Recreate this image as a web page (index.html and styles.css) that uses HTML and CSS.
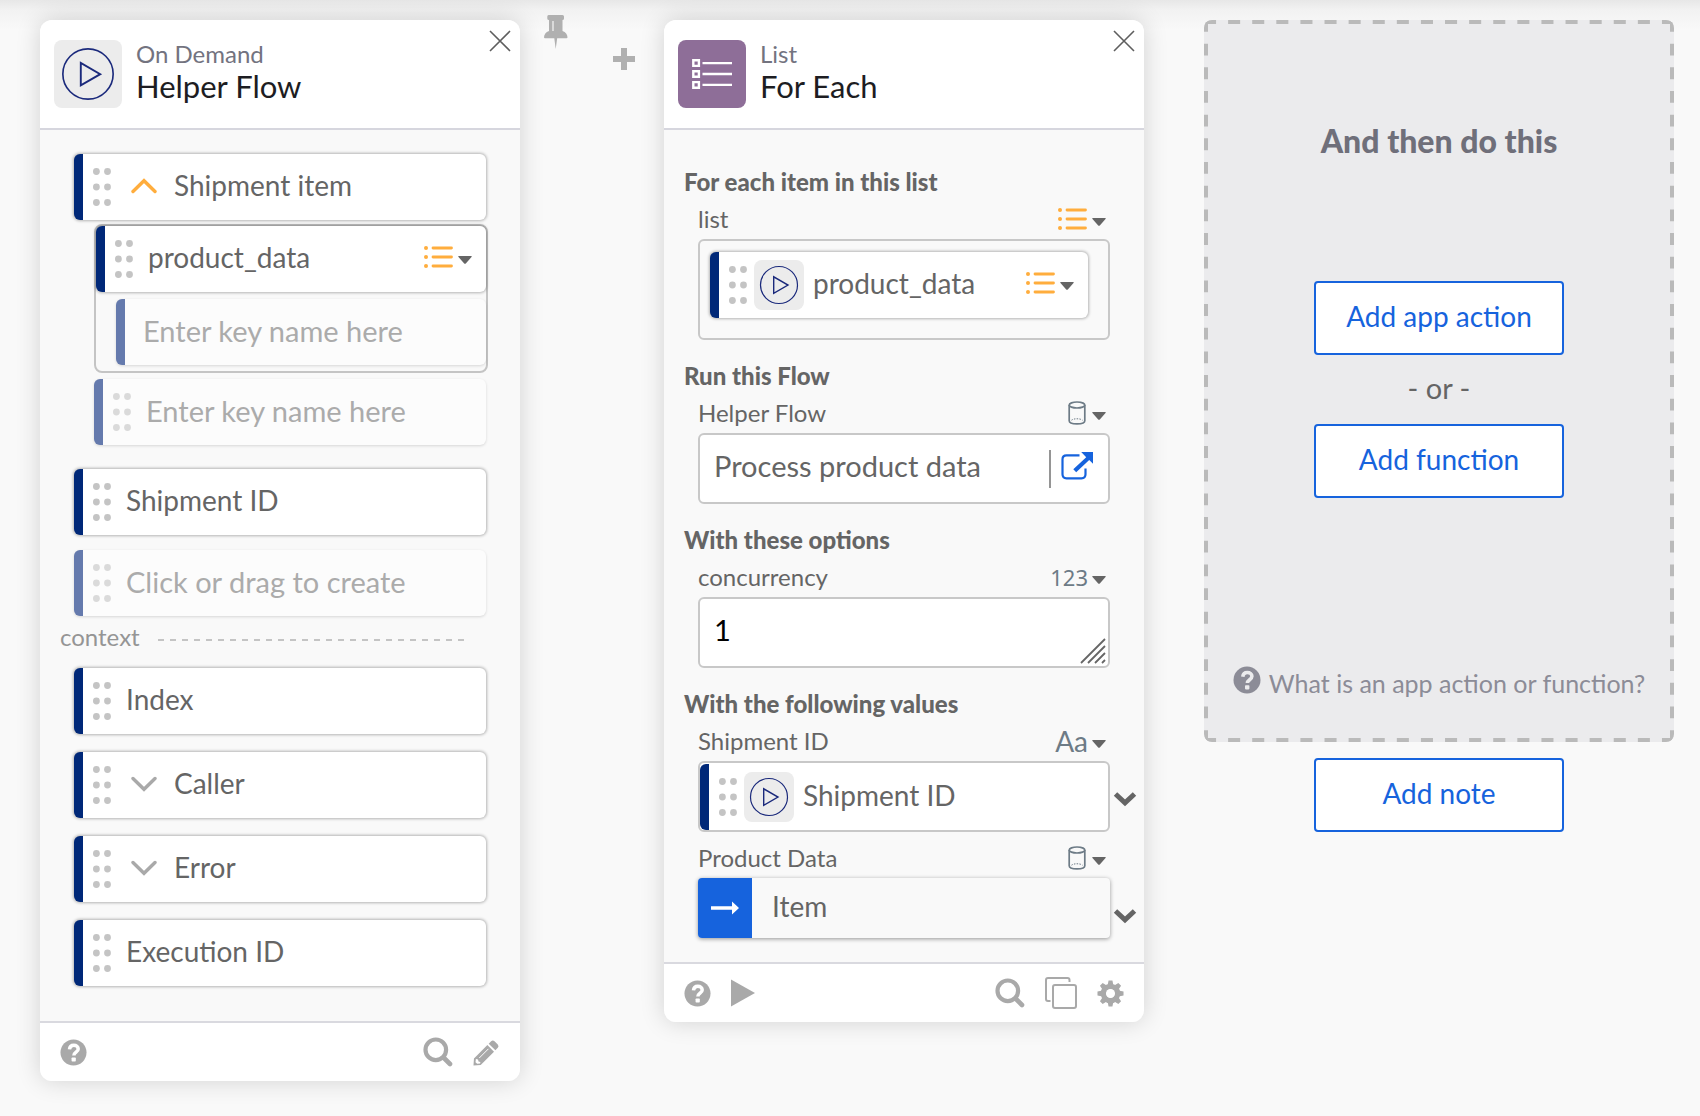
FILE: index.html
```html
<!DOCTYPE html>
<html lang="en">
<head>
<meta charset="utf-8">
<meta name="viewport" content="width=device-width, initial-scale=1">
<title>Flow builder</title>
<link rel="stylesheet" href="styles.css">
</head>
<body>
<svg class="sprite" aria-hidden="true">
  <symbol id="i-grip" viewBox="0 0 18 38"><g fill="currentColor"><circle cx="3.4" cy="3.5" r="3.4"/><circle cx="14.5" cy="3.5" r="3.4"/><circle cx="3.4" cy="19" r="3.4"/><circle cx="14.5" cy="19" r="3.4"/><circle cx="3.4" cy="34.5" r="3.4"/><circle cx="14.5" cy="34.5" r="3.4"/></g></symbol>
  <symbol id="i-play-ring" viewBox="0 0 50 50"><circle cx="25" cy="25" r="18.5" fill="none" stroke="#1b2a7c" stroke-width="1.2"/><path d="M19.7 16.8v16.6L34 25.1z" fill="none" stroke="#1b2a7c" stroke-width="1.4"/></symbol>
  <symbol id="i-close" viewBox="0 0 22 22"><path d="M1 1l20 20M21 1L1 21" fill="none" stroke="#5e5e5e" stroke-width="1.6"/></symbol>
  <symbol id="i-up" viewBox="0 0 26 16"><path d="M2 13.5L13 2.7l11 10.8" fill="none" stroke="currentColor" stroke-width="3.4" stroke-linecap="round"/></symbol>
  <symbol id="i-down" viewBox="0 0 26 16"><path d="M2 2.5l11 10.8L24 2.5" fill="none" stroke="currentColor" stroke-width="3.4" stroke-linecap="round"/></symbol>
  <symbol id="i-down-bold" viewBox="0 0 24 16"><path d="M2.5 3l9.5 8.800L21.5 3" fill="none" stroke="#656565" stroke-width="5"/></symbol>
  <symbol id="i-list" viewBox="0 0 30 22"><g stroke="#ffad3d" stroke-width="2.8" stroke-linecap="round"><path d="M9 2h18.5M9 11h18.5M9 20h18.5"/></g><g fill="#ffad3d"><circle cx="2" cy="2" r="2"/><circle cx="2" cy="11" r="2"/><circle cx="2" cy="20" r="2"/></g></symbol>
  <symbol id="i-caret" viewBox="0 0 14 8"><path d="M.8 0h12.4q1 .2.3 1L7.8 7.5q-.8.7-1.600 0L.5 1Q-.2.2.8 0z" fill="#656565"/></symbol>
  <symbol id="i-cylinder" viewBox="0 0 18 24"><g fill="none" stroke="#6d7b86" stroke-width="1.7"><ellipse cx="9" cy="4" rx="7.8" ry="3"/><path d="M1.200 4v15.800c0 4.200 15.600 4.200 15.600 0V4"/><path d="M3.500 19.200c2-1.900 9-1.900 11 0" stroke-dasharray="1.5 1.2" stroke-width="1"/></g></symbol>
  <symbol id="i-help" viewBox="0 0 28 28"><circle cx="14" cy="14" r="13.5" fill="currentColor"/><path d="M9.800 10.800c.3-3 2.100-4.300 4.500-4.300 2.700 0 4.600 1.500 4.600 3.800 0 3.400-4.500 3.400-4.500 6.800" fill="none" stroke="var(--hole)" stroke-width="3.6"/><rect x="12" y="19.2" width="4.4" height="4.2" rx=".8" fill="var(--hole)"/></symbol>
  <symbol id="i-search" viewBox="0 0 30 30"><circle cx="12.8" cy="12.8" r="10.3" fill="none" stroke="currentColor" stroke-width="4.2"/><path d="M20.500 20.500l6.500 6.500" stroke="currentColor" stroke-width="4.6" stroke-linecap="round"/></symbol>
  <symbol id="i-pencil" viewBox="0 0 28 28"><path d="M18.800 2.400q1.700-1.600 3.500 0l3.400 3.300q1.600 1.800 0 3.500l-2.500 2.500-6.900-6.800zM14.900 6.300l6.900 6.800L8 26.900l-7.500.6.5-7.300z" fill="currentColor"/><path d="M16 10.200L6.500 19.700" stroke="#fff" stroke-width="1"/><path d="M3 20.800l2.200.5.500 2 2 .6-.4 1.500-3 .3-1.700-1.500z" fill="#fff"/></symbol>
  <symbol id="i-gear" viewBox="0 0 28 28"><g fill="currentColor"><path id="cog" d="M11.200 4.500l.8-4h4l.8 4v5h-5.600zM11.200 23.500l.8 4h4l.8-4v-5h-5.600z"/><use href="#cog" transform="rotate(45 14 14)"/><use href="#cog" transform="rotate(90 14 14)"/><use href="#cog" transform="rotate(135 14 14)"/></g><circle cx="14" cy="14" r="7.3" fill="none" stroke="currentColor" stroke-width="5.6"/><circle cx="14" cy="14" r="4.6" fill="#fff"/></symbol>
</svg>

<main class="canvas">
  <section class="card">
    <header class="card-head">
      <span class="app-icon"><svg><use href="#i-play-ring"/></svg></span>
      <div class="card-names"><p class="card-app">On Demand</p><h2 class="card-title">Helper Flow</h2></div>
      <button class="bare close" aria-label="Close"><svg width="22" height="22"><use href="#i-close"/></svg></button>
    </header>
    <div class="outputs">
      <div class="chip"><svg class="grip"><use href="#i-grip"/></svg><button class="bare toggle open" aria-label="Collapse"><svg width="26" height="16"><use href="#i-up"/></svg></button><span class="chip-label">Shipment item</span></div>
      <div class="children">
        <div class="group">
          <div class="chip"><svg class="grip"><use href="#i-grip"/></svg><span class="chip-label">product_data</span><button class="bare type" aria-label="Type: list"><svg width="30" height="22"><use href="#i-list"/></svg><svg class="caret"><use href="#i-caret"/></svg></button></div>
          <div class="chip ghost nested"><input class="chip-input" placeholder="Enter key name here" aria-label="Key name in product_data"></div>
        </div>
        <div class="chip ghost"><svg class="grip"><use href="#i-grip"/></svg><input class="chip-input" placeholder="Enter key name here" aria-label="Key name in Shipment item"></div>
      </div>
      <div class="stack">
        <div class="chip"><svg class="grip"><use href="#i-grip"/></svg><span class="chip-label">Shipment ID</span></div>
        <div class="chip ghost"><svg class="grip"><use href="#i-grip"/></svg><input class="chip-input" placeholder="Click or drag to create" aria-label="New output"></div>
      </div>
      <div class="divider"><span>context</span><i class="dashes"></i></div>
      <div class="stack wide">
        <div class="chip"><svg class="grip"><use href="#i-grip"/></svg><span class="chip-label">Index</span></div>
        <div class="chip"><svg class="grip"><use href="#i-grip"/></svg><button class="bare toggle" aria-label="Expand"><svg width="26" height="16"><use href="#i-down"/></svg></button><span class="chip-label">Caller</span></div>
        <div class="chip"><svg class="grip"><use href="#i-grip"/></svg><button class="bare toggle" aria-label="Expand"><svg width="26" height="16"><use href="#i-down"/></svg></button><span class="chip-label">Error</span></div>
        <div class="chip"><svg class="grip"><use href="#i-grip"/></svg><span class="chip-label">Execution ID</span></div>
      </div>
    </div>
    <footer class="card-foot">
      <button class="bare" aria-label="Help"><svg width="27" height="27"><use href="#i-help"/></svg></button>
      <span class="spacer"></span>
      <button class="bare" aria-label="Search"><svg width="30" height="30"><use href="#i-search"/></svg></button>
      <button class="bare" aria-label="Edit"><svg width="27" height="27"><use href="#i-pencil"/></svg></button>
    </footer>
  </section>

  <div class="between">
    <button class="bare pin" aria-label="Pin"><svg width="24" height="34" viewBox="0 0 24 34"><path d="M4.500 0h14q1.500 0 1.500 1.500v2q0 1.500-1.500 1.500v11c3.300 1.200 4.800 3.200 5 6.200q0 1-1 1H13.200L11.700 34 10.300 23.200H1q-1 0-1-1c.2-3 1.700-5 5-6.200V5Q3.300 5 3.300 3.500v-2Q3.300 0 4.500 0z" fill="currentColor"/><path d="M9 6v10" stroke="#f1f1f1" stroke-width="1.3"/></svg></button>
    <button class="bare plus" aria-label="Add card here"><svg width="24" height="24" viewBox="0 0 24 24"><path d="M12 1v22M1 12h22" stroke="currentColor" stroke-width="6"/></svg></button>
  </div>

  <section class="card">
    <header class="card-head">
      <span class="app-icon purple"><svg viewBox="0 0 68 68"><g fill="none" stroke="#fff" stroke-width="2.4"><path d="M15.300 20.300h5.600v5.600h-5.600zM15.300 31.200h5.600v5.600h-5.600zM15.300 42.100h5.600v5.600h-5.600zM24.500 23.100H54M24.500 34H54M24.500 44.900H54"/></g></svg></span>
      <div class="card-names"><p class="card-app">List</p><h2 class="card-title">For Each</h2></div>
      <button class="bare close" aria-label="Close"><svg width="22" height="22"><use href="#i-close"/></svg></button>
    </header>
    <div class="inputs">
      <h3 class="section">For each item in this list</h3>
      <div class="field">
        <div class="field-head"><span>list</span><button class="bare type" aria-label="Type: list"><svg width="30" height="22"><use href="#i-list"/></svg><svg class="caret"><use href="#i-caret"/></svg></button></div>
        <div class="drop">
          <div class="chip"><svg class="grip"><use href="#i-grip"/></svg><svg class="source"><use href="#i-play-ring"/></svg><span class="chip-label">product_data</span><button class="bare type" aria-label="Type: list"><svg width="30" height="22"><use href="#i-list"/></svg><svg class="caret"><use href="#i-caret"/></svg></button></div>
        </div>
      </div>
      <h3 class="section">Run this Flow</h3>
      <div class="field">
        <div class="field-head"><label for="flow">Helper Flow</label><button class="bare type obj" aria-label="Type: object"><svg width="18" height="24"><use href="#i-cylinder"/></svg><svg class="caret"><use href="#i-caret"/></svg></button></div>
        <div class="box">
          <input id="flow" class="box-input" value="Process product data">
          <a class="open-link" href="#flow" aria-label="Open flow"><svg width="33" height="28" viewBox="0 0 33 28"><path d="M18.500 3.300H5.500q-4 0-4 4v15q0 4 4 4h15q4 0 4-4V16.500" fill="none" stroke="#1663dd" stroke-width="2.2"/><path d="M20.200 0H32v11.800l-3.800-3.700-13 12.200-2.900-3L25.200 5.200z" fill="#1663dd"/></svg></a>
        </div>
      </div>
      <h3 class="section">With these options</h3>
      <div class="field">
        <div class="field-head"><label for="concurrency">concurrency</label><button class="bare type" aria-label="Type: number"><span class="num">123</span><svg class="caret"><use href="#i-caret"/></svg></button></div>
        <div class="box area">
          <textarea id="concurrency" class="box-input black" rows="1">1</textarea>
          <svg class="resizer" width="26" height="26" viewBox="0 0 26 26"><path d="M1 25L25 1M8 25L25 8M15 25l10-10M22 25l3-3" stroke="#666" stroke-width="1.8"/></svg>
        </div>
      </div>
      <h3 class="section">With the following values</h3>
      <div class="field">
        <div class="field-head"><span>Shipment ID</span><button class="bare type" aria-label="Type: text"><span class="txt">Aa</span><svg class="caret"><use href="#i-caret"/></svg></button></div>
        <div class="box holder">
          <div class="chip"><svg class="grip"><use href="#i-grip"/></svg><svg class="source"><use href="#i-play-ring"/></svg><span class="chip-label">Shipment ID</span></div>
        </div>
        <button class="bare expand" aria-label="Expand Shipment ID"><svg width="24" height="16"><use href="#i-down-bold"/></svg></button>
      </div>
      <div class="field next">
        <div class="field-head"><span>Product Data</span><button class="bare type obj" aria-label="Type: object"><svg width="18" height="24"><use href="#i-cylinder"/></svg><svg class="caret"><use href="#i-caret"/></svg></button></div>
        <div class="item-box"><span class="item-arrow"><svg width="28" height="14" viewBox="0 0 28 14"><path d="M0 5.200h21V.5L28 7l-7 6.500V8.800H0z" fill="#fff"/></svg></span><span class="item-label">Item</span></div>
        <button class="bare expand" aria-label="Expand Product Data"><svg width="24" height="16"><use href="#i-down-bold"/></svg></button>
      </div>
    </div>
    <footer class="card-foot">
      <button class="bare" aria-label="Help"><svg width="27" height="27"><use href="#i-help"/></svg></button>
      <button class="bare" aria-label="Run card"><svg width="24" height="28" viewBox="0 0 24 28"><path d="M0 .5L24 14 0 27.500z" fill="currentColor"/></svg></button>
      <span class="spacer"></span>
      <button class="bare" aria-label="Search"><svg width="30" height="30"><use href="#i-search"/></svg></button>
      <button class="bare" aria-label="Duplicate"><svg width="32" height="32" viewBox="0 0 32 32"><g fill="none" stroke="currentColor" stroke-width="2"><rect x="8" y="8" width="23" height="23" rx="2"/><path d="M5.500 24H3q-2 0-2-2V3q0-2 2-2h19.500q2 0 2 2v2"/></g></svg></button>
      <button class="bare" aria-label="Settings"><svg width="27" height="27"><use href="#i-gear"/></svg></button>
    </footer>
  </section>

  <aside class="next-step">
    <div class="prompt">
      <svg class="outline" aria-hidden="true"><g stroke="#bababa" stroke-width="8" stroke-dasharray="1 1"><line x1="0" y1="0" x2="100%" y2="0" pathLength="39"/><line x1="0" y1="100%" x2="100%" y2="100%" pathLength="39"/><line x1="0" y1="0" x2="0" y2="100%" pathLength="61"/><line x1="100%" y1="0" x2="100%" y2="100%" pathLength="61"/></g></svg>
      <h2 class="prompt-title">And then do this</h2>
      <button class="action">Add app action</button>
      <span class="or">- or -</span>
      <button class="action">Add function</button>
      <a class="help-link" href="#help"><svg width="28" height="28"><use href="#i-help"/></svg><span>What is an app action or function?</span></a>
    </div>
    <button class="action">Add note</button>
  </aside>
</main>
</body>
</html>
```

FILE: styles.css
```css
* { box-sizing: border-box; }

body {
  margin: 0;
  min-height: 100vh;
  background: linear-gradient(#e7e7e7, #f2f2f2 10px, #f9f9f9 30px) no-repeat #f9f9f9;
  color: #656565;
  font: 24px/28px Lato, "Liberation Sans", sans-serif;
}

h2, h3, p { margin: 0; font-weight: 400; }
svg { display: block; flex: none; }
.sprite { position: absolute; width: 0; height: 0; }

.bare {
  display: flex;
  padding: 0;
  border: 0;
  background: none;
  color: inherit;
  font: inherit;
}

.canvas {
  display: grid;
  grid-template-columns: minmax(0, 480fr) 144px minmax(0, 480fr) minmax(0, 530fr);
  align-items: start;
  padding: 20px 26px 35px 40px;
}

/* Cards */
.card {
  border-radius: 12px;
  background: #f9f9f9;
  box-shadow: 0 0 24px rgba(0, 0, 0, .16);
}

.card-head {
  display: flex;
  align-items: flex-start;
  gap: 14px;
  height: 110px;
  padding: 20px 9px 0 14px;
  border-bottom: 2px solid #d6d6de;
  border-radius: 12px 12px 0 0;
  background: #fff;
}

.app-icon {
  flex: none;
  width: 68px;
  height: 68px;
  border-radius: 8px;
  background: #ececec;
}
.app-icon svg { width: 100%; height: 100%; }
.app-icon.purple { background: #8e6e98; }
.card-names { flex: 1; }
.card-app { color: #73737f; }
.card-title { color: #1d1d22; font-size: 31px; line-height: 36px; }
.close { margin-top: -10px; }

.card-foot {
  --hole: #fff;
  display: flex;
  align-items: center;
  gap: 20px;
  height: 60px;
  padding: 0 20px;
  border-top: 2px solid #d9d9df;
  border-radius: 0 0 12px 12px;
  background: #fff;
  color: #a9a9a9;
}
.spacer { flex: 1; }

/* Draggable value chips */
.chip {
  display: flex;
  align-items: center;
  height: 66px;
  padding-right: 14px;
  border-left: 9px solid #002878;
  border-radius: 6px;
  background: #fff;
  box-shadow: 0 0 3px 1px rgba(0, 0, 0, .28);
  font-size: 28px;
}
.grip { width: 18px; height: 38px; margin: 0 15px 0 10px; color: #c4c4c4; }
.toggle { margin: 0 17px 2px 5px; color: #a9a9a9; }
.toggle.open { color: #ffad3d; }
.chip-label { flex: 1; padding-bottom: 4px; }
.source {
  width: 50px;
  height: 50px;
  margin: 0 9px 0 -8px;
  border-radius: 8px;
  background: #ececec;
}

.ghost {
  border-left-color: #657aad;
  background: #fcfcfc;
  box-shadow: 0 1px 3px rgba(0, 0, 0, .14);
}
.ghost .grip { color: #dadada; }
.chip-input {
  flex: 1;
  min-width: 0;
  padding: 0 0 4px;
  border: 0;
  background: none;
  font: inherit;
  font-size: 29px;
}
.chip-input::placeholder { color: #ababab; opacity: 1; }

.type { align-items: center; gap: 4px; }
.chip .type { padding-bottom: 4px; }
.caret { width: 14px; height: 8px; margin-top: 6px; }
.type.obj { gap: 6px; }

.outputs { padding: 24px 34px 35px; }
.children { margin: 4px 0 24px 20px; }
.group {
  margin: 0 -2px 6px 0;
  padding-bottom: 6px;
  border: 2px solid #c4c4c4;
  border-radius: 8px;
}
.nested { margin: 7px 0 0 20px; padding-left: 18px; }
.stack { display: grid; grid-template-columns: minmax(0, 1fr); gap: 15px; }
.stack.wide { gap: 18px; }

.divider {
  display: flex;
  align-items: center;
  gap: 18px;
  margin: 7px 16px 17px -14px;
  color: #959595;
}
.dashes {
  flex: 1;
  height: 2px;
  margin-top: 6px;
  background: repeating-linear-gradient(90deg, #c4c4c4 0 6px, transparent 6px 12px);
}

/* Gap between two cards */
.between {
  display: flex;
  justify-content: space-between;
  margin-top: -5px;
  padding: 0 28px 0 24px;
  color: #b0b0b0;
}
.plus { margin-top: 32px; }

/* Input fields */
.inputs { padding: 38px 0 24px 20px; }
.section {
  margin-bottom: 9px;
  font-size: 24px;
  font-weight: 900;
  line-height: 28px;
}
.field {
  display: grid;
  grid-template-columns: minmax(0, 1fr) 34px;
  row-gap: 6px;
  margin: 0 0 22px 14px;
}
.field:has(+ .next) { margin-bottom: 12px; }
.field.next { margin-bottom: 0; }
.field-head {
  display: flex;
  grid-column: 1;
  justify-content: space-between;
  height: 28px;
  padding-right: 4px;
}
.num { color: #6d7b86; font: 22px/28px "Noto Sans", sans-serif; }
.txt { color: #6d7b86; font-size: 28px; }

.drop, .box { grid-column: 1; border: 2px solid #c8c8c8; border-radius: 6px; }
.drop { padding: 11px 20px 20px 10px; }
.box {
  display: flex;
  align-items: center;
  height: 71px;
  background: #fff;
}
.box-input {
  flex: 1;
  min-width: 0;
  height: 60px;
  padding: 0 14px 6px;
  border: 0;
  background: none;
  color: inherit;
  font: inherit;
  font-size: 29px;
}
.box-input.black { padding-top: 13px; color: #000; resize: none; overflow: hidden; }
.open-link {
  display: flex;
  height: 38px;
  padding: 2px 14px 0 10px;
  border-left: 2px solid #959595;
}
.area { position: relative; }
.resizer { position: absolute; right: 2px; bottom: 2px; }
.holder .chip { flex: 1; box-shadow: none; }
.expand { grid-column: 2; margin: 30px 0 0 3px; align-self: start; }

.item-box {
  display: flex;
  grid-column: 1;
  align-items: center;
  height: 60px;
  border-radius: 4px;
  box-shadow: 0 1px 4px rgba(0, 0, 0, .4);
  overflow: hidden;
  font-size: 28px;
}
.item-arrow {
  display: grid;
  place-items: center;
  align-self: stretch;
  width: 54px;
  background: #1663dd;
}
.item-label { padding: 0 20px 4px; }

/* Next step column */
.next-step {
  display: flex;
  flex-direction: column;
  align-items: center;
  gap: 16px;
  margin-left: 60px;
}
.prompt {
  position: relative;
  display: flex;
  flex-direction: column;
  align-items: center;
  width: 100%;
  padding: 103px 14px 45px;
  border-radius: 8px;
  background: #ebebed;
  overflow: hidden;
}
.outline { position: absolute; inset: 0; width: 100%; height: 100%; pointer-events: none; }
.prompt-title {
  margin-bottom: 122px;
  color: #6f6f7a;
  font-size: 32px;
  font-weight: 900;
  line-height: 36px;
}
.action {
  width: 250px;
  height: 74px;
  padding: 0 0 4px;
  border: 2px solid #1663dd;
  border-radius: 4px;
  background: #fff;
  color: #1663dd;
  font: 28px/34px Lato, "Liberation Sans", sans-serif;
}
.or { padding: 16px 0 19px; font-size: 29px; line-height: 34px; }
.help-link {
  --hole: #ebebed;
  display: flex;
  gap: 8px;
  margin-top: 168px;
  color: #8c8c97;
  font-size: 25px;
  text-decoration: none;
}
.help-link span { padding-top: 3px; }
```
